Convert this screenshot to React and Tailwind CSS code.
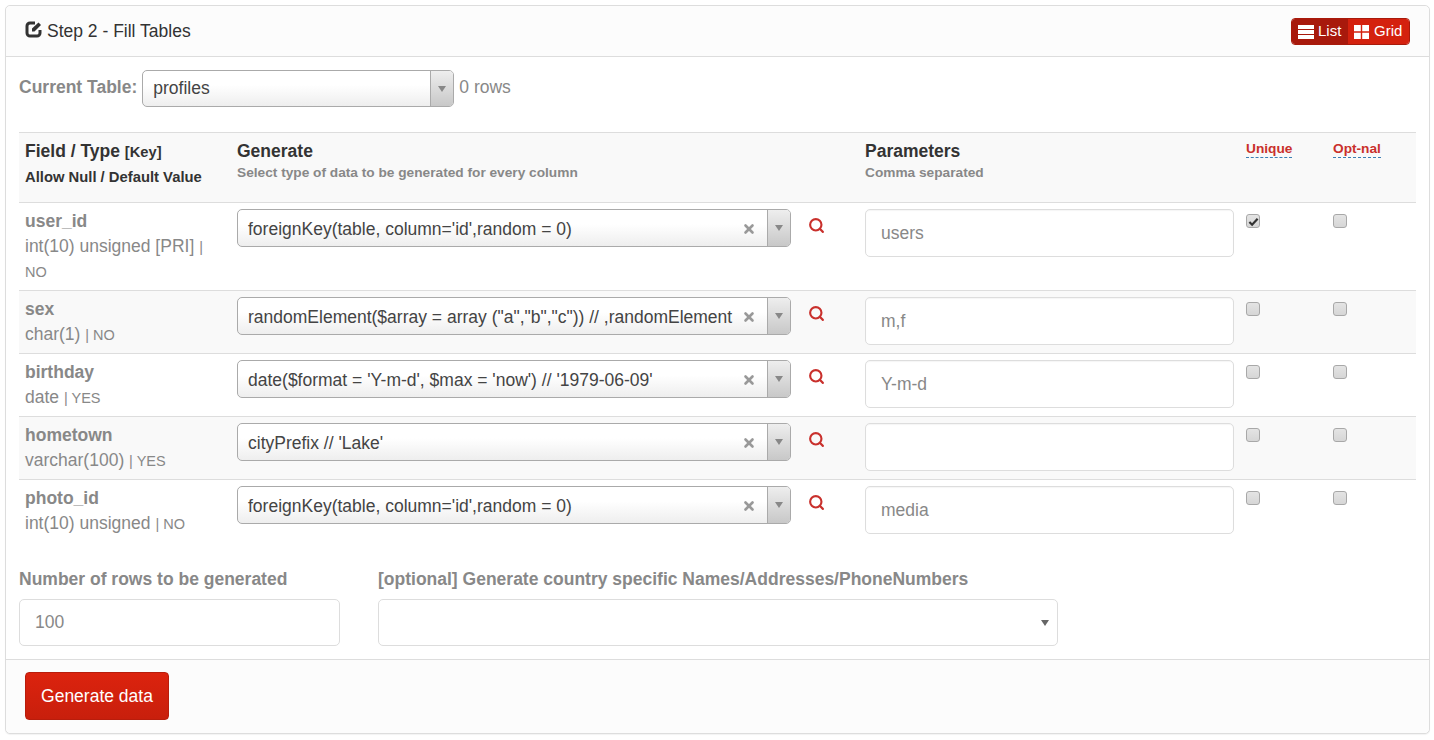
import { Search, X } from 'lucide-react';

const ROWS = [
  { name: 'user_id', type: 'int(10) unsigned [PRI]', nullable: 'NO', generator: "foreignKey(table, column='id',random = 0)", param: 'users', unique: true, height: 'h-[88px]' },
  { name: 'sex', type: 'char(1)', nullable: 'NO', generator: 'randomElement($array = array ("a","b","c")) // ,randomElement', param: 'm,f', height: 'h-[63px]' },
  { name: 'birthday', type: 'date', nullable: 'YES', generator: "date($format = 'Y-m-d', $max = 'now') // '1979-06-09'", param: 'Y-m-d', height: 'h-[63px]' },
  { name: 'hometown', type: 'varchar(100)', nullable: 'YES', generator: "cityPrefix // 'Lake'", param: '', height: 'h-[63px]' },
  { name: 'photo_id', type: 'int(10) unsigned', nullable: 'NO', generator: "foreignKey(table, column='id',random = 0)", param: 'media', height: 'h-[63px]' },
];

const GRID = 'grid grid-cols-[218px_628px_381px_87px_83px]';

function Arrow() {
  return <span className="block w-0 h-0 border-x-[4px] border-x-transparent border-t-[6px] border-t-[#888]" />;
}

function Chosen({ value, clearable, width }) {
  return (
    <div className={`${width} ${clearable ? 'h-[38px] leading-[39px]' : 'h-[37px] leading-[35px]'} flex items-stretch rounded-[5px] border border-[#aaa] bg-gradient-to-b from-white from-40% to-[#eeeeee] text-[#444] text-[17.5px] overflow-hidden`}>
      <span className="flex-1 min-w-0 pl-[10px] whitespace-nowrap overflow-hidden">{value}</span>
      {clearable && (
        <span className="w-[32px] pr-[4px] flex items-center justify-center">
          <X size={14} strokeWidth={4.5} className="text-[#999] mt-[2px]" />
        </span>
      )}
      <span className="w-[23px] flex items-center justify-center border-l border-[#aaa] bg-gradient-to-b from-[#eeeeee] to-[#c8c8c8]">
        <Arrow />
      </span>
    </div>
  );
}

function Check({ checked }) {
  return (
    <span className="flex items-center justify-center w-[14px] h-[14px] rounded-[3px] border border-[#a8a8a8] bg-gradient-to-b from-[#e4e4e4] to-[#d6d6d6]">
      {checked && (
        <svg viewBox="0 0 12 12" className="w-[11px] h-[11px]">
          <path d="M1.5 6.5 L4.5 9.5 L10.5 3" fill="none" stroke="#333" strokeWidth="2.4" />
        </svg>
      )}
    </span>
  );
}

function Row({ row, striped, last }) {
  return (
    <div className={`${GRID} ${row.height} ${last ? '' : 'border-b border-[#ddd]'} ${striped ? 'bg-[#f9f9f9]' : 'bg-white'}`}>
      <div className="pl-[6px] pt-[6px] text-[#888]">
        <div className="font-bold text-[17.5px] leading-[24px]">{row.name}</div>
        <div className="text-[17.5px] leading-[24px] mt-[1px] pr-[10px]">
          {row.type} <span className="text-[14.5px]">| {row.nullable}</span>
        </div>
      </div>
      <div className="pt-[6px] flex items-start">
        <Chosen value={row.generator} clearable width="w-[554px]" />
        <Search size={17} strokeWidth={3} className="ml-[17px] mt-[8px] text-[#c9302c]" />
      </div>
      <div className="pt-[6px]">
        <div className="w-[369px] h-[48px] rounded-[5px] border border-[#ddd] bg-white px-[15px] leading-[46px] text-[17.5px] text-[#888] shadow-[inset_0_1px_1px_rgba(0,0,0,0.04)]">
          {row.param}
        </div>
      </div>
      <div className="pt-[11px]"><Check checked={row.unique} /></div>
      <div className="pt-[11px]"><Check /></div>
    </div>
  );
}

export default function App() {
  return (
    <div className="h-[740px] bg-white pt-[5px] px-[5px] font-['Liberation_Sans',Arial,sans-serif]">
      <div className="w-[1425px] h-[729px] flex flex-col rounded-[5px] border border-[#ddd] bg-white shadow-[0_1px_1px_rgba(0,0,0,0.05)]">
        <div className="h-[51px] shrink-0 flex items-center justify-between pl-[18px] pr-[19px] bg-[#fcfcfc] border-b border-[#ddd] rounded-t-[5px]">
          <div className="flex items-center gap-[3px] text-[17.5px] text-[#333]">
            <svg viewBox="0 0 20 20" className="w-[20px] h-[20px] -mt-[4px]">
              <path d="M11 4H6a3 3 0 0 0-3 3v7a3 3 0 0 0 3 3h7a3 3 0 0 0 3-3v-3" fill="none" stroke="#333" strokeWidth="3" />
              <path d="M8 12.5V9.5L14.5 3.5L17 6L10.5 12.5Z" fill="#333" />
            </svg>
            <span>Step 2 - Fill Tables</span>
          </div>
          <div className="flex w-[119px] h-[27px] mt-px rounded-[4px] overflow-hidden text-white text-[15px] border border-[#a81a0b]">
            <span className="flex items-center gap-[4px] w-[56px] pl-[6px] bg-[#a8190c]">
              <svg viewBox="0 0 16 14" className="w-[16px] h-[14px]">
                <path d="M0 0h16v4H0zM0 5h16v4H0zM0 10h16v4H0z" fill="#fff" />
              </svg>
              List
            </span>
            <span className="flex items-center gap-[5px] flex-1 pl-[6px] bg-[#d4210e]">
              <svg viewBox="0 0 15 14" className="w-[15px] h-[14px]">
                <path d="M0 0h6.8v6.2H0zM8.2 0H15v6.2H8.2zM0 7.8h6.8V14H0zM8.2 7.8H15V14H8.2z" fill="#fff" />
              </svg>
              Grid
            </span>
          </div>
        </div>

        <div className="flex-1 px-[13px]">
          <div className="flex items-center h-[37px] mt-[13px]">
            <span className="font-bold text-[17.5px] text-[#888] mr-[5px] -mt-[3px]">Current Table:</span>
            <Chosen value="profiles" width="w-[312px]" />
            <span className="ml-[5px] text-[17.5px] text-[#888] -mt-[2px]">0 rows</span>
          </div>

          <div className="mt-[25px] border-t border-[#ddd]">
            <div className={`${GRID} h-[70px] bg-[#f9f9f9] border-b border-[#ddd]`}>
              <div className="pl-[6px] pt-[8px] text-[#333] font-bold">
                <div className="text-[17.5px] leading-[20px]">Field / Type <span className="text-[14.7px]">[Key]</span></div>
                <div className="text-[14.8px] leading-[20px] mt-[5px] whitespace-nowrap">Allow Null / Default Value</div>
              </div>
              <div className="pt-[8px] font-bold">
                <div className="text-[17.5px] leading-[20px] text-[#333]">Generate</div>
                <div className="text-[13.7px] leading-[18px] mt-[3px] text-[#888]">Select type of data to be generated for every column</div>
              </div>
              <div className="pt-[8px] font-bold">
                <div className="text-[17.5px] leading-[20px] text-[#333]">Parameters</div>
                <div className="text-[13.7px] leading-[18px] mt-[3px] text-[#888]">Comma separated</div>
              </div>
              <div className="pt-[8px]">
                <span className="block w-fit text-[13.7px] leading-[16px] font-bold text-[#c9302c] border-b border-dashed border-[#3b7fb5]">Unique</span>
              </div>
              <div className="pt-[8px]">
                <span className="block w-fit text-[13.7px] leading-[16px] font-bold text-[#c9302c] border-b border-dashed border-[#3b7fb5]">Opt-nal</span>
              </div>
            </div>
            {ROWS.map((row, i) => (
              <Row key={row.name} row={row} striped={i % 2 === 1} last={i === ROWS.length - 1} />
            ))}
          </div>

          <div className="flex gap-[38px] pt-[26px]">
            <div className="w-[321px]">
              <div className="font-bold text-[17.5px] text-[#888] leading-[20px]">Number of rows to be generated</div>
              <div className="mt-[10px] h-[47px] rounded-[5px] border border-[#ddd] px-[15px] leading-[44px] text-[17.5px] text-[#888]">100</div>
            </div>
            <div className="w-[680px]">
              <div className="font-bold text-[17.5px] text-[#888] leading-[20px]">[optional] Generate country specific Names/Addresses/PhoneNumbers</div>
              <div className="mt-[10px] h-[47px] rounded-[5px] border border-[#ddd] flex items-center justify-end pr-[8px]">
                <span className="block w-0 h-0 border-x-[4px] border-x-transparent border-t-[6px] border-t-[#666]" />
              </div>
            </div>
          </div>
        </div>

        <div className="h-[74px] shrink-0 pl-[19px] pt-[12px] bg-[#fcfcfc] border-t border-[#ddd] rounded-b-[5px]">
          <div className="w-[144px] h-[48px] flex items-center justify-center rounded-[4px] border border-[#b81d0c] bg-gradient-to-b from-[#dc230e] to-[#c81f0c] text-white text-[17.5px]">
            Generate data
          </div>
        </div>
      </div>
    </div>
  );
}
